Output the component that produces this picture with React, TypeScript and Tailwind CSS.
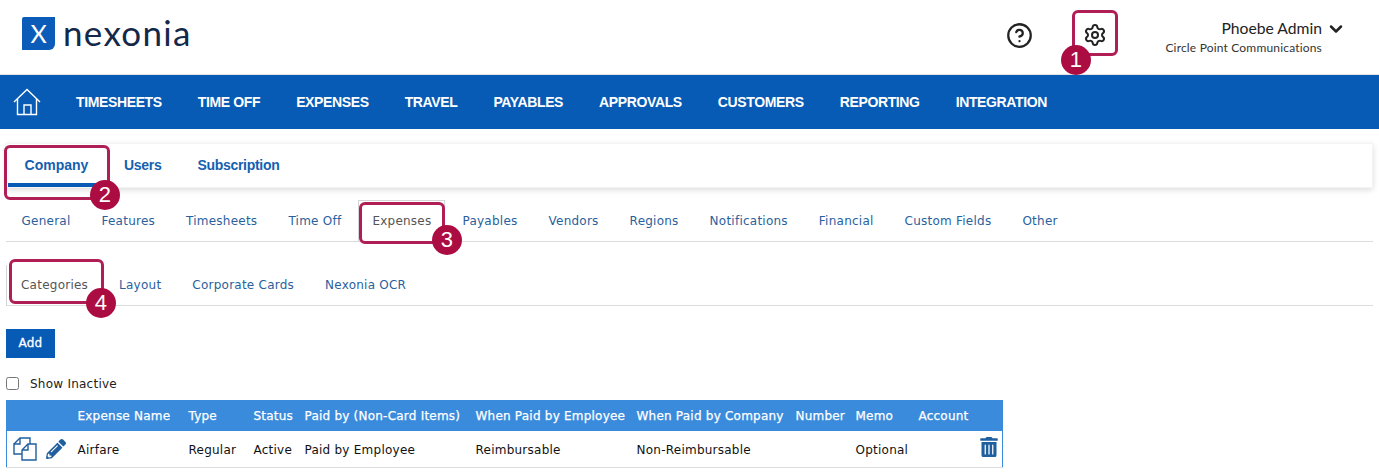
import { ChevronDown, CircleHelp, Settings } from 'lucide-react'
import { FaPencilAlt, FaTrashAlt } from 'react-icons/fa'

const mainNav = ['TIMESHEETS', 'TIME OFF', 'EXPENSES', 'TRAVEL', 'PAYABLES', 'APPROVALS', 'CUSTOMERS', 'REPORTING', 'INTEGRATION']
const settingsNav = ['General', 'Features', 'Timesheets', 'Time Off', 'Expenses', 'Payables', 'Vendors', 'Regions', 'Notifications', 'Financial', 'Custom Fields', 'Other']
const expenseNav = ['Categories', 'Layout', 'Corporate Cards', 'Nexonia OCR']
const columns = [
  { label: '', width: 'w-[66px]' },
  { label: 'Expense Name', width: 'w-[111px]' },
  { label: 'Type', width: 'w-[65px]' },
  { label: 'Status', width: 'w-[51px]' },
  { label: 'Paid by (Non-Card Items)', width: 'w-[171px]' },
  { label: 'When Paid by Employee', width: 'w-[161px]' },
  { label: 'When Paid by Company', width: 'w-[159px]' },
  { label: 'Number', width: 'w-[60px]' },
  { label: 'Memo', width: 'w-[63px]' },
  { label: 'Account', width: 'w-[61px]' },
  { label: '', width: 'w-[28px]' },
]
const row = ['Airfare', 'Regular', 'Active', 'Paid by Employee', 'Reimbursable', 'Non-Reimbursable', '', 'Optional', '']

function HomeIcon() {
  return (
    <svg width="28" height="28" viewBox="0 0 28 28" fill="none" stroke="white" strokeWidth="1.4">
      <path d="M1 14 14 1.5 27 14" />
      <path d="M4.5 11v15.5h19V11" />
      <path d="M11 26.5V17h7v9.5" />
    </svg>
  )
}

function CopyIcon() {
  return (
    <svg width="24" height="24" viewBox="0 0 24 24" fill="none" stroke="#1f5f9e" strokeWidth="1.4">
      <path d="M1 7 7 1h10v6" />
      <path d="M7 1v6H1v10h8" />
      <path d="M9 13l6-6h8v16H9z" fill="white" />
      <path d="M15 7v6H9" />
    </svg>
  )
}

function Callout({ box, badge, n }: { box: string; badge: string; n: number }) {
  return (
    <>
      <div className={`absolute rounded-md border-[3px] border-[#b01e56] ${box}`} />
      <div className={`absolute flex h-[30px] w-[30px] items-center justify-center rounded-full bg-[#ab0d42] font-['Liberation_Sans',sans-serif] text-[22px] leading-none text-white ${badge}`}>
        {n}
      </div>
    </>
  )
}

export default function App() {
  return (
    <div className="relative h-[473px] overflow-hidden bg-white font-['DejaVu_Sans',sans-serif] text-xs tracking-[0.24px]">
      <header className="flex h-[75px] items-center border-b border-[#e2e2e2] pl-[22px]">
        <div className="mb-[7px] flex h-[33px] w-[33px] items-center justify-center rounded-tl-[2px] rounded-br-[6px] bg-[#0b5cb8] font-['Lato',sans-serif] text-[25px] leading-none tracking-normal text-white">
          X
        </div>
        <span className="mb-[10px] ml-2 font-['Lato',sans-serif] text-[35px] leading-none tracking-[1.3px] text-[#14294a]">nexonia</span>
        <div className="mr-[57px] ml-auto flex items-center pb-1 font-['Lato',sans-serif] tracking-normal">
          <CircleHelp size={27} strokeWidth={2} className="text-[#222]" />
          <Settings size={24} strokeWidth={2} className="ml-[50px] text-[#222]" />
          <div className="mt-[4px] ml-[58px] flex w-[157px] flex-col items-end">
            <div className="flex items-center text-[15.7px] text-[#222]">
              Phoebe Admin
              <ChevronDown size={20} strokeWidth={3} className="-mr-[24px] ml-[4px] text-[#222]" />
            </div>
            <div className="mt-[1px] text-xs tracking-[0.18px] whitespace-nowrap text-[#333]">Circle Point Communications</div>
          </div>
        </div>
      </header>

      <nav className="flex h-[54px] items-center bg-[#075bb5] pl-[13px] font-['Liberation_Sans',sans-serif] text-sm font-bold tracking-[-0.37px] text-white">
        <HomeIcon />
        <div className="ml-[35px] flex gap-9">
          {mainNav.map((item) => (
            <span key={item}>{item}</span>
          ))}
        </div>
      </nav>

      <div className="mx-[6px] mt-[14px] flex h-[45px] border border-[#f4f4f4] bg-white font-['Liberation_Sans',sans-serif] text-sm font-bold tracking-normal text-[#1560b0] shadow-[0_2px_6px_rgba(0,0,0,0.14)]">
        <span className="ml-[1px] flex w-[97px] justify-center border-b-4 border-[#075bb5] pt-[11px]">Company</span>
        <span className="ml-[19px] pt-[11px] tracking-[-0.3px]">Users</span>
        <span className="ml-9 pt-[11px] tracking-[-0.3px]">Subscription</span>
      </div>

      <div className="mx-[6px] mt-[12px] flex h-[42px] border-b border-[#dcdcdc] text-[#2a5f9e]">
        {settingsNav.map((item) =>
          item === 'Expenses' ? (
            <span key={item} className="mx-[1.5px] flex items-center border border-b-0 border-[#d4d4d4] bg-white px-[13px] text-[#555]">
              {item}
            </span>
          ) : (
            <span key={item} className="flex items-center px-[15.5px]">
              {item}
            </span>
          ),
        )}
      </div>

      <div className="mx-[6px] mt-[23px] flex h-[41px] border-b border-[#dcdcdc] text-[#2a5f9e]">
        {expenseNav.map((item, i) => (
          <span key={item} className={i === 0 ? 'flex items-center border-l border-[#d4d4d4] pr-[15.5px] pl-[14px] text-[#555]' : 'flex items-center px-[15.5px]'}>
            {item}
          </span>
        ))}
      </div>

      <button className="mt-[23px] ml-[6px] block h-[29px] w-[49px] bg-[#075bb5] pb-px text-center text-xs text-white [-webkit-text-stroke:0.3px_white]">Add</button>

      <label className="mt-[18px] ml-[6px] flex h-[14px] items-center text-[#222]">
        <input type="checkbox" className="h-[13px] w-[13px]" />
        <span className="mt-[2px] ml-[11px]">Show Inactive</span>
      </label>

      <table className="mt-[10px] ml-[6px] w-[997px] table-fixed border-r border-l border-[#3a8bdc] text-left">
        <thead>
          <tr className="h-[31px] bg-[#3a8bdc] text-white">
            {columns.map((col, i) => (
              <th key={i} className={`${col.width} pl-[5px] text-xs font-normal tracking-[0.22px] whitespace-nowrap [-webkit-text-stroke:0.25px_white]`}>
                {col.label}
              </th>
            ))}
          </tr>
        </thead>
        <tbody>
          <tr className="h-[36px] border-b border-[#dcdcdc] text-[#111]">
            <td className="pl-[6px]">
              <div className="flex items-center">
                <CopyIcon />
                <FaPencilAlt size={20} className="ml-[9px] text-[#1f5f9e]" />
              </div>
            </td>
            {row.map((cell, i) => (
              <td key={i} className="pt-[3px] pl-[5px]">
                {cell}
              </td>
            ))}
            <td className="pl-[4px]">
              <FaTrashAlt size={20} className="-mt-1 text-[#1f5f9e]" />
            </td>
          </tr>
        </tbody>
      </table>

      <Callout box="left-[1072px] top-[10px] h-[46px] w-[46px]" badge="left-[1061px] top-[45px]" n={1} />
      <Callout box="left-[4px] top-[145px] h-[55px] w-[106px]" badge="left-[90px] top-[180px]" n={2} />
      <Callout box="left-[359px] top-[202px] h-[42px] w-[86px]" badge="left-[432px] top-[225px]" n={3} />
      <Callout box="left-[9px] top-[259px] h-[45px] w-[95px]" badge="left-[86px] top-[288px]" n={4} />
    </div>
  )
}
